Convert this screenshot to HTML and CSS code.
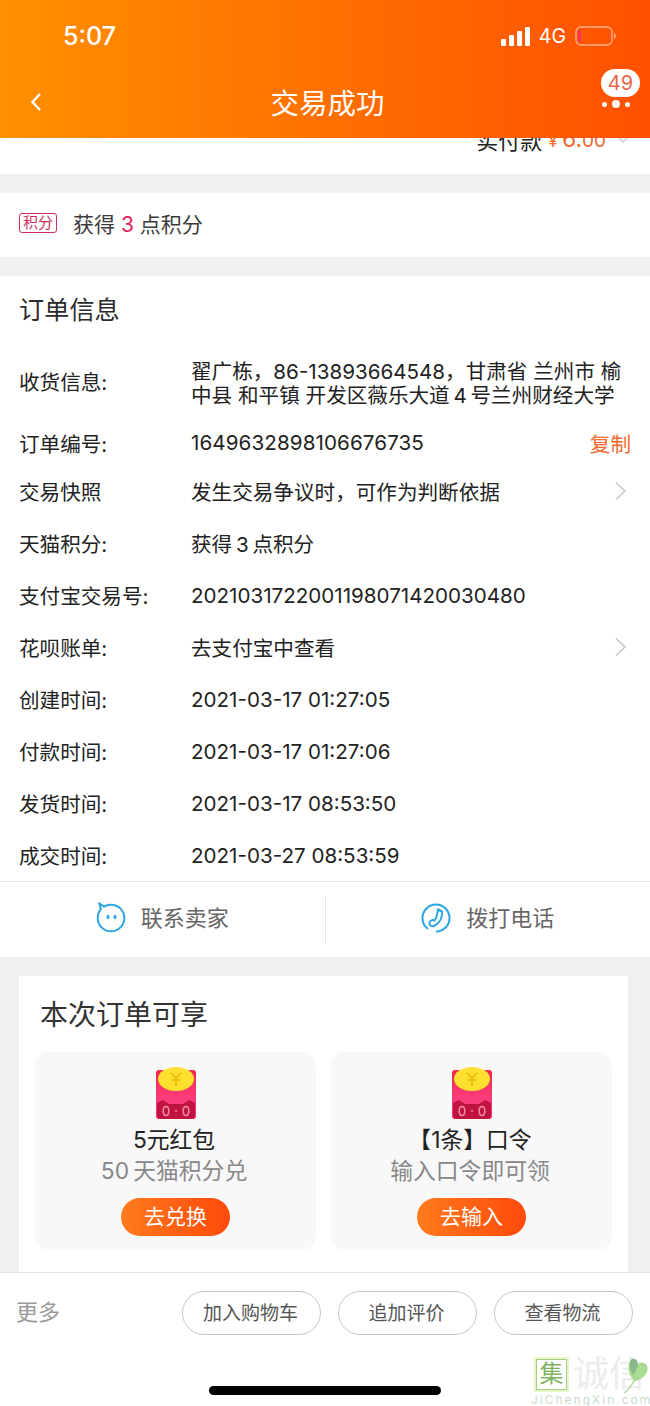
FILE: index.html
```html
<!DOCTYPE html>
<html lang="zh-CN">
<head>
    <meta charset="UTF-8">
    <meta name="viewport" content="width=device-width, initial-scale=1.0">
    <title>交易成功</title>
    <link rel="stylesheet" href="styles.css">
</head>
<body>
    <header class="top">
        <div class="status">
            <span class="clock">5:07</span>
            <div class="status-right">
                <svg class="signal" width="29" height="19" viewBox="0 0 29 19"><rect x="0" y="12" width="5" height="7" rx="1"/><rect x="8" y="8" width="5" height="11" rx="1"/><rect x="16" y="4" width="5" height="15" rx="1"/><rect x="24" y="0" width="5" height="19" rx="1"/></svg>
                <span class="net">4G</span>
                <svg class="battery" width="42" height="20" viewBox="0 0 42 20"><rect x="1" y="1" width="36" height="18" rx="5" fill="none" stroke="#ffb08a" stroke-width="1.3"/><rect x="3" y="4" width="3" height="12" rx="1" fill="#f5325a"/><path d="M39 7c2 .5 2.500 5.500 0 6z" fill="#ffb08a"/></svg>
            </div>
        </div>
        <div class="nav">
            <svg class="back" width="14" height="20" viewBox="0 0 14 20"><path d="M11 2 3.500 10 11 18" fill="none" stroke="#fff" stroke-width="2.400"/></svg>
            <h1 class="nav-title">交易成功</h1>
            <div class="more">
                <span class="badge">49</span>
                <div class="dots"><i></i><i class="big"></i><i></i></div>
            </div>
        </div>
    </header>

    <main class="content">
        <section class="paid">
            <div class="paid-line">
                <span>实付款</span>
                <span class="price"><small>¥</small>&thinsp;6.<small class="cents">00</small></span>
                <svg width="14" height="9" viewBox="0 0 14 9"><path d="M1 1 7 7 13 1" fill="none" stroke="#ccc" stroke-width="1.500"/></svg>
            </div>
        </section>

        <section class="points">
            <span class="points-tag">积分</span>
            <span>获得 <b class="num">3</b> 点积分</span>
        </section>

        <section class="order">
            <h2 class="order-title">订单信息</h2>
            <div class="rows">
                <div class="row row-address">
                    <span class="label">收货信息:</span>
                    <span class="value address">翟广栋，86-13893664548，甘肃省 兰州市 榆中县 和平镇 开发区薇乐大道&thinsp;4&thinsp;号兰州财经大学</span>
                </div>
                <div class="row row-number">
                    <span class="label">订单编号:</span>
                    <span class="value">1649632898106676735</span>
                    <span class="copy">复制</span>
                </div>
                <div class="row">
                    <span class="label">交易快照</span>
                    <span class="value">发生交易争议时，可作为判断依据</span>
                    <svg class="arrow" width="13" height="20" viewBox="0 0 13 20"><path d="M2 1.500 11 10 2 18.500" fill="none" stroke="#c8c8c8" stroke-width="1.600"/></svg>
                </div>
                <div class="row">
                    <span class="label">天猫积分:</span>
                    <span class="value">获得&thinsp;3&thinsp;点积分</span>
                </div>
                <div class="row">
                    <span class="label">支付宝交易号:</span>
                    <span class="value">2021031722001198071420030480</span>
                </div>
                <div class="row">
                    <span class="label">花呗账单:</span>
                    <span class="value">去支付宝中查看</span>
                    <svg class="arrow" width="13" height="20" viewBox="0 0 13 20"><path d="M2 1.500 11 10 2 18.500" fill="none" stroke="#c8c8c8" stroke-width="1.600"/></svg>
                </div>
                <div class="row">
                    <span class="label">创建时间:</span>
                    <span class="value">2021-03-17 01:27:05</span>
                </div>
                <div class="row">
                    <span class="label">付款时间:</span>
                    <span class="value">2021-03-17 01:27:06</span>
                </div>
                <div class="row">
                    <span class="label">发货时间:</span>
                    <span class="value">2021-03-17 08:53:50</span>
                </div>
                <div class="row">
                    <span class="label">成交时间:</span>
                    <span class="value">2021-03-27 08:53:59</span>
                </div>
            </div>
            <div class="contact">
                <div class="contact-item">
                    <svg width="30" height="31" viewBox="0 0 30 31"><path d="M3.500 1.500 8 4.500C10 3.400 12.500 2.800 15 2.800 22.500 2.800 28.300 8.700 28.300 16S22.500 29.300 15 29.300 1.700 23.300 1.700 16C1.700 12.500 2.800 9.600 4.800 7.200Z" fill="none" stroke="#2aa6e2" stroke-width="2"/><ellipse cx="12" cy="15" rx="1.500" ry="2.200" fill="#2aa6e2"/><ellipse cx="19" cy="15" rx="1.500" ry="2.200" fill="#2aa6e2"/></svg>
                    <span class="contact-text">联系卖家</span>
                </div>
                <div class="contact-item">
                    <svg width="30" height="31" viewBox="0 0 30 31"><path d="M7 27C3.500 24.500 1.500 20.500 1.500 16 1.500 8.500 7.500 2.500 15 2.500S28.500 8.500 28.500 16 22.500 29.500 15 29.500" fill="none" stroke="#2aa6e2" stroke-width="2"/><path d="M17 7.500 21 9.500C21.500 15 19 21 13 24 10.500 25 8 23 8.500 20.500 9 18.500 11.500 17.500 13.500 18.500 15.500 16 16 14 16 12.500Z" fill="none" stroke="#2aa6e2" stroke-width="2"/></svg>
                    <span class="contact-text">拨打电话</span>
                </div>
            </div>
        </section>

        <section class="benefits">
            <div class="card">
                <h2 class="card-title">本次订单可享</h2>
                <div class="tiles">
                    <div class="tile">
                        <svg class="packet" width="42" height="52" viewBox="0 0 42 52"><defs><linearGradient id="redA" x1="0" y1="0" x2="0" y2="1"><stop offset="0" stop-color="#ee2c4e"/><stop offset=".6" stop-color="#fb3c7c"/><stop offset="1" stop-color="#f0306a"/></linearGradient></defs><rect x="1" y="3" width="40" height="49" rx="3" fill="url(#redA)"/><path d="M2 36 8 33 14 37H28L34 33 40 36V49Q40 52 37 52H5Q2 52 2 49Z" fill="#c01440"/><ellipse cx="21" cy="12" rx="18" ry="12" fill="#fde030"/><path d="M16 6 21 11 26 6M21 11V19M17 13H25" fill="none" stroke="#eab800" stroke-width="1.500"/><ellipse cx="11" cy="44" rx="2.800" ry="4.500" fill="none" stroke="#f58aa5" stroke-width="1.500"/><ellipse cx="31" cy="44" rx="2.800" ry="4.500" fill="none" stroke="#f58aa5" stroke-width="1.500"/><circle cx="21" cy="44" r="1" fill="#f58aa5"/></svg>
                        <div class="tile-name">5元红包</div>
                        <div class="tile-desc">50&thinsp;天猫积分兑</div>
                        <span class="tile-btn">去兑换</span>
                    </div>
                    <div class="tile">
                        <svg class="packet" width="42" height="52" viewBox="0 0 42 52"><rect x="1" y="3" width="40" height="49" rx="3" fill="url(#redA)"/><path d="M2 36 8 33 14 37H28L34 33 40 36V49Q40 52 37 52H5Q2 52 2 49Z" fill="#c01440"/><ellipse cx="21" cy="12" rx="18" ry="12" fill="#fde030"/><path d="M16 6 21 11 26 6M21 11V19M17 13H25" fill="none" stroke="#eab800" stroke-width="1.500"/><ellipse cx="11" cy="44" rx="2.800" ry="4.500" fill="none" stroke="#f58aa5" stroke-width="1.500"/><ellipse cx="31" cy="44" rx="2.800" ry="4.500" fill="none" stroke="#f58aa5" stroke-width="1.500"/><circle cx="21" cy="44" r="1" fill="#f58aa5"/></svg>
                        <div class="tile-name">【1条】口令</div>
                        <div class="tile-desc">输入口令即可领</div>
                        <span class="tile-btn">去输入</span>
                    </div>
                </div>
            </div>
        </section>
    </main>

    <footer class="bottom">
        <div class="actions">
            <span class="more-link">更多</span>
            <div class="buttons">
                <span class="pill">加入购物车</span>
                <span class="pill">追加评价</span>
                <span class="pill">查看物流</span>
            </div>
        </div>
        <div class="home-bar"></div>
        <div class="watermark">
            <div class="wm-top">
                <span class="wm-ji">集</span>
                <span class="wm-cx">诚信</span>
            </div>
            <svg class="wm-leaf" width="27" height="36" viewBox="4 1 23 34"><path d="M4 35C8 32 11 28 14 22" fill="none" stroke="#b5dca0" stroke-width="1.500"/><path d="M14 24C8 19 6 10 10 4 13 1 16 3 17 8 20 5 26 6 26 12 26 18 20 22 14 24Z" fill="#a8dc90"/><path d="M10 4C13 1 16 3 17 8 16 12 14 16 12 18 9 13 8 8 10 4Z" fill="#8ab88a"/></svg>
            <div class="wm-url">JiChengXin.com</div>
        </div>
    </footer>
</body>
</html>
```

FILE: styles.css
```css
* {
    box-sizing: border-box;
}
body {
    margin: 0;
    width: 650px;
    height: 1406px;
    display: flex;
    flex-direction: column;
    overflow: hidden;
    background-color: #f0f0f0;
    color: #2b2b2b;
    font-family: Inter, "Noto Sans CJK SC", sans-serif;
    font-size: 20.6px;
}
h1, h2 {
    margin: 0;
    font-weight: 400;
}

/* header */
.top {
    height: 138px;
    flex: none;
    background: linear-gradient(90deg, #ff9000, #ff5000);
    color: #fff;
}
.status {
    height: 70px;
    padding: 20px 33px 0 63px;
    display: flex;
    justify-content: space-between;
    align-items: flex-start;
}
.clock {
    font-size: 25px;
    line-height: 32px;
    font-weight: 500;
}
.status-right {
    display: flex;
    align-items: center;
    height: 32px;
}
.signal {
    fill: #fff;
}
.net {
    font-size: 19.500px;
    margin: 0 9px 0 9px;
}
.nav {
    height: 68px;
    padding: 0 20px 4px 29px;
    display: grid;
    grid-template-columns: 1fr auto 1fr;
    align-items: center;
}
.nav-title {
    font-size: 28.500px;
    line-height: 40px;
    margin-left: -4px;
    font-family: "Noto Sans CJK SC", sans-serif;
}
.more {
    justify-self: end;
    width: 42px;
    height: 60px;
    position: relative;
    margin-top: -6px;
}
.badge {
    position: absolute;
    top: 0;
    right: -10px;
    width: 39px;
    height: 28px;
    border-radius: 14px;
    background-color: #fff;
    color: #e8654a;
    font-size: 20px;
    line-height: 28px;
    text-align: center;
}
.dots {
    position: absolute;
    left: 14px;
    top: 31px;
    display: flex;
    align-items: center;
    gap: 5px;
}
.dots i {
    width: 5px;
    height: 5px;
    border-radius: 50%;
    background-color: #fff;
}
.dots i.big {
    width: 8px;
    height: 8px;
}

/* scrolled content */
.content {
    flex: 1;
    min-height: 0;
    overflow: hidden;
}
.paid {
    height: 36px;
    background-color: #fff;
    overflow: hidden;
    padding-right: 20px;
}
.paid-line {
    margin-top: -13px;
    display: flex;
    justify-content: flex-end;
    align-items: center;
    gap: 6px;
    height: 28px;
    font-size: 22px;
    color: #222;
}
.price {
    color: #ee6a2c;
    font-size: 23px;
    margin-right: 4px;
}
.price small {
    font-size: 17px;
}
.price .cents {
    font-size: 19px;
}
.points {
    margin-top: 19px;
    height: 64px;
    background-color: #fff;
    padding: 0 0 4px 19px;
    display: flex;
    align-items: center;
    gap: 16px;
    color: #3c3c3c;
    font-size: 21px;
}
.points-tag {
    width: 38px;
    height: 20px;
    border: 1px solid #c9305c;
    border-radius: 3px;
    color: #c9305c;
    font-size: 15px;
    line-height: 18px;
    text-align: center;
}
.num {
    color: #e0245e;
    font-weight: 400;
}
.order {
    margin-top: 19px;
    background-color: #fff;
}
.order-title {
    font-size: 25.2px;
    line-height: 36px;
    padding: 16px 0 0 19px;
    height: 69px;
}
.row {
    height: 52px;
    padding: 0 21px 0 19px;
    display: flex;
    align-items: center;
    color: #222;
}
.label {
    width: 172px;
    flex: none;
}
.value {
    flex: 1;
}
.row-address {
    height: 75px;
    padding-right: 24px;
}
.row-address .label {
    margin-bottom: 3px;
}
.address {
    line-height: 24px;
    margin-top: 2px;
}
.row-number {
    height: 45px;
    padding-right: 19px;
}
.row-number .value {
    letter-spacing: .1px;
}
.copy {
    color: #f0692c;
}
.arrow {
    margin-right: 2px;
}
.contact {
    height: 76px;
    border-top: 1px solid #e2e2e2;
    display: flex;
    align-items: center;
}
.contact-item {
    flex: 1;
    height: 46px;
    padding-bottom: 4px;
    display: flex;
    align-items: center;
    justify-content: center;
    gap: 15px;
    font-size: 22px;
    color: #666;
}
.contact-text {
    padding-bottom: 4px;
}
.contact-item + .contact-item {
    border-left: 1px solid #e2e2e2;
}

/* benefits card */
.benefits {
    margin-top: 19px;
    padding: 0 22px 0 19px;
}
.card {
    background-color: #fff;
    padding: 20px 16px 22px;
}
.card-title {
    font-size: 28px;
    line-height: 38px;
    padding-left: 5px;
    height: 56px;
    color: #333;
}
.tiles {
    display: grid;
    grid-template-columns: 281px 281px;
    gap: 15px;
}
.tile {
    height: 198px;
    background-color: #f8f8f8;
    border-radius: 14px;
    padding-top: 15px;
    display: flex;
    flex-direction: column;
    align-items: center;
}
.tile-name {
    margin-top: 5px;
    font-size: 22.800px;
    line-height: 32px;
    color: #222;
    padding-right: 3px;
}
.tile-desc {
    font-size: 22.800px;
    line-height: 30px;
    color: #888;
    padding-right: 3px;
}
.tile-btn {
    margin-top: 12px;
    width: 109px;
    height: 38px;
    border-radius: 19px;
    background: linear-gradient(90deg, #ff7a1c, #ff4a0c);
    color: #fff;
    font-size: 21px;
    line-height: 38px;
    text-align: center;
}

/* bottom bar */
.bottom {
    height: 134px;
    flex: none;
    background-color: #fff;
    border-top: 1px solid #e2e2e2;
    position: relative;
}
.actions {
    padding: 18px 17px 0 16px;
    display: flex;
    justify-content: space-between;
    align-items: center;
}
.more-link {
    font-size: 22px;
    color: #999;
    padding-bottom: 6px;
}
.buttons {
    display: flex;
    gap: 17px;
}
.pill {
    width: 139px;
    height: 44px;
    border: 1px solid #c8c8c8;
    border-radius: 22px;
    font-size: 19px;
    line-height: 44px;
    text-align: center;
    color: #555;
    padding-right: 2px;
}
.home-bar {
    position: absolute;
    left: 209px;
    top: 113px;
    width: 232px;
    height: 9px;
    border-radius: 5px;
    background-color: #000;
}
.watermark {
    position: absolute;
    right: 0;
    top: 82px;
    width: 119px;
}
.wm-top {
    display: flex;
    align-items: center;
    gap: 5px;
    height: 38px;
    padding-left: 4px;
}
.wm-ji {
    width: 33px;
    height: 33px;
    border: 2px solid #a5cf85;
    outline: 2px solid #e8f5c8;
    outline-offset: -1px;
    color: #7fb562;
    font-size: 24px;
    line-height: 27px;
    text-align: center;
}
.wm-cx {
    color: #ececec;
    font-size: 36px;
    line-height: 36px;
    white-space: nowrap;
}
.wm-leaf {
    position: absolute;
    right: 0;
    top: 2px;
}
.wm-url {
    color: #c9dcc9;
    font-size: 12px;
    line-height: 14px;
    letter-spacing: 2px;
    white-space: nowrap;
}
```
